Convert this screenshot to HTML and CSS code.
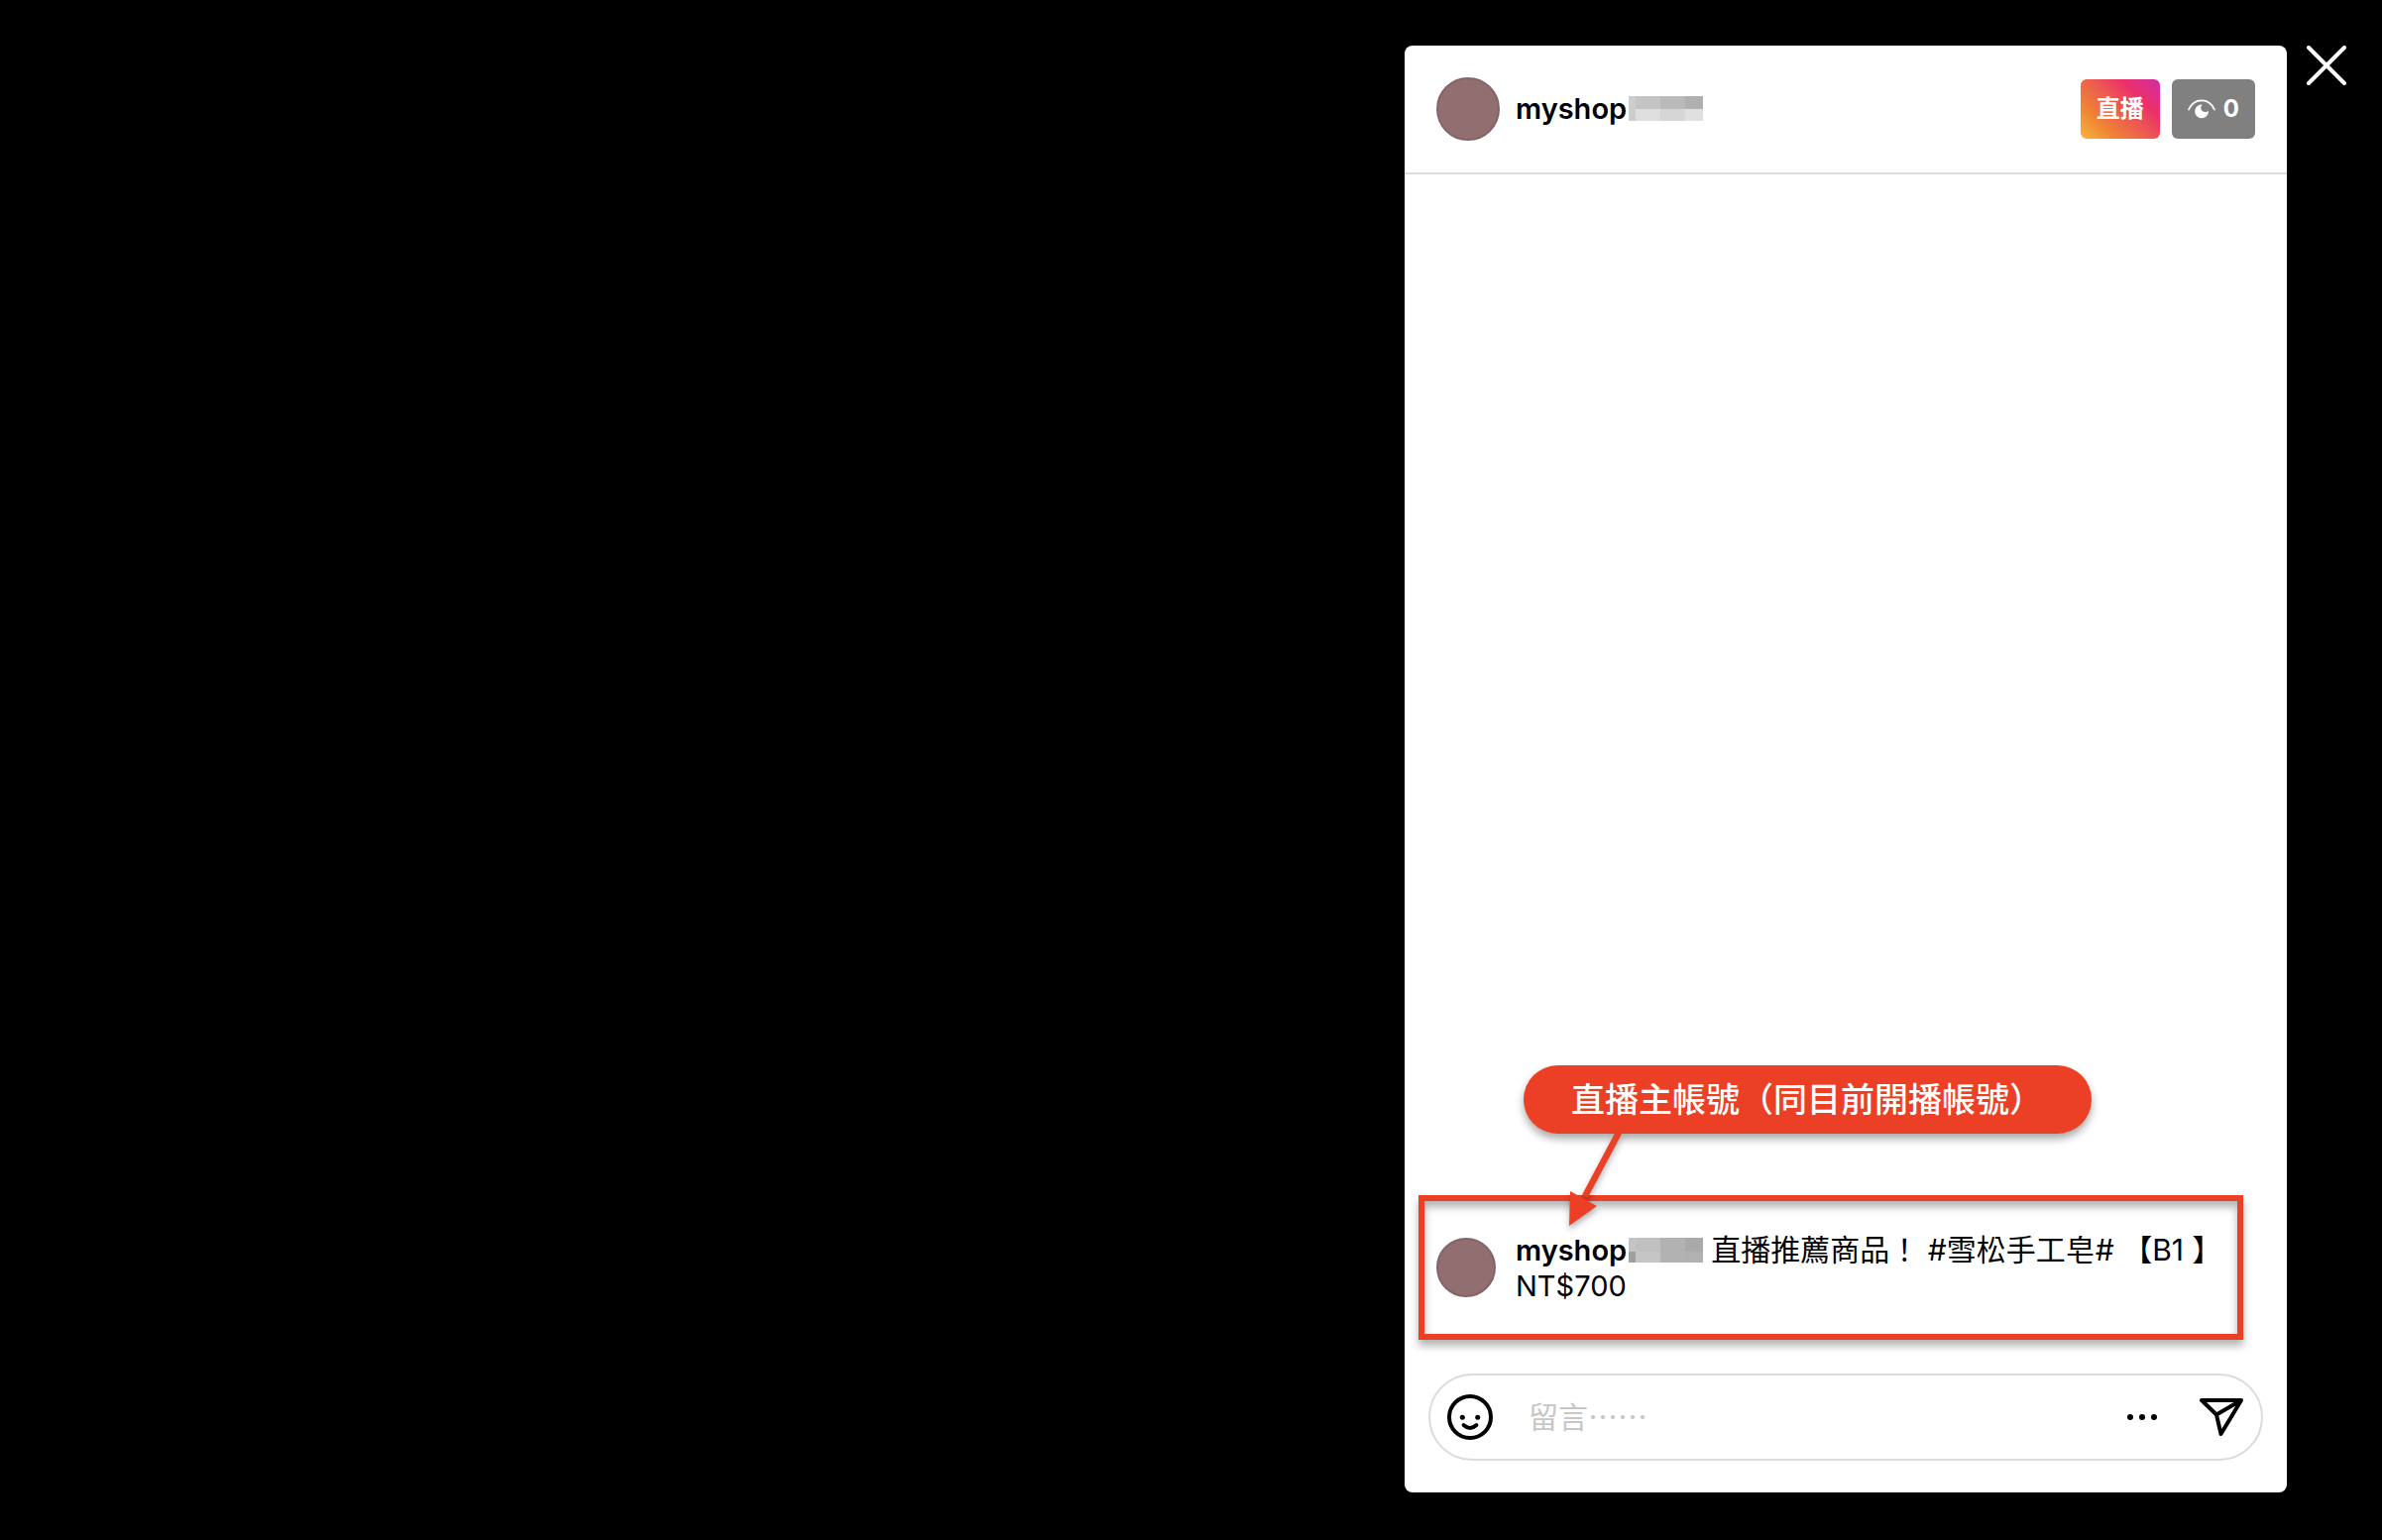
FILE: index.html
```html
<!DOCTYPE html>
<html lang="zh-Hant">
<head>
    <meta charset="UTF-8">
    <meta name="viewport" content="width=device-width, initial-scale=1.0">
    <title>直播</title>
    <link rel="stylesheet" href="styles.css">
</head>
<body>
    <div class="live-page">
        <!-- Video -->
        <main class="video-area"></main>

        <!-- Comment panel -->
        <aside class="panel">
            <header class="panel-header">
                <span class="avatar"></span>
                <span class="username">myshop<svg class="mask" viewBox="0 0 75 25" shape-rendering="crispEdges" aria-hidden="true">
                    <rect width="7" height="25" fill="#cdcdcd"/>
                    <rect x="7" width="25" height="13" fill="#c4c4c4"/>
                    <rect x="32" width="25" height="13" fill="#bababa"/>
                    <rect x="57" width="18" height="13" fill="#b0b0b0"/>
                    <rect x="7" y="13" width="25" height="12" fill="#dedede"/>
                    <rect x="32" y="13" width="25" height="12" fill="#d6d6d6"/>
                    <rect x="57" y="13" width="18" height="12" fill="#e0e0e0"/>
                </svg></span>
                <div class="badges">
                    <span class="badge badge-live">直播</span>
                    <span class="badge badge-viewers">
                        <svg class="eye-icon" viewBox="0 0 28 20" aria-hidden="true">
                            <path d="M1 10.500C6.500-1.800 21.500-1.800 27 10.500" fill="none" stroke="#fff" stroke-width="1.800" stroke-linecap="round"/>
                            <path d="M14.600 5.500A6.900 6.900 0 1 0 20.900 11.800A4.400 4.400 0 0 1 14.600 5.500Z" fill="#fff"/>
                        </svg>
                        <span>0</span>
                    </span>
                </div>
            </header>

            <div class="thread">
                <article class="comment">
                    <span class="avatar avatar-small"></span>
                    <p class="comment-text"><strong>myshop</strong><svg class="mask" viewBox="0 0 75 25" shape-rendering="crispEdges" aria-hidden="true">
                        <rect width="7" height="14" fill="#c4c4c4"/>
                        <rect x="7" width="25" height="14" fill="#c0c0c0"/>
                        <rect x="32" width="25" height="25" fill="#b2b2b2"/>
                        <rect x="57" width="18" height="14" fill="#a9a9a9"/>
                        <rect y="14" width="7" height="11" fill="#a0a0a0"/>
                        <rect x="7" y="14" width="25" height="11" fill="#c5c5c5"/>
                        <rect x="57" y="14" width="18" height="11" fill="#b1b1b1"/>
                    </svg> <span class="product">直播推薦商品！ #雪松手工皂# 【B1 】</span> <span class="price">NT$700</span></p>

                    <!-- Callout -->
                    <div class="callout">直播主帳號（同目前開播帳號）</div>
                    <svg class="callout-arrow" viewBox="0 0 60 100" aria-hidden="true">
                        <path d="M53-1L19 63" stroke="#eb4026" stroke-width="6.500" fill="none"/>
                        <path d="M3 93L4 58L31 73Z" fill="#eb4026"/>
                    </svg>
                </article>
            </div>

            <form class="message-bar">
                <button type="button" class="icon-button" aria-label="表情符號">
                    <svg width="46" height="46" viewBox="0 0 46 46">
                        <circle cx="23" cy="23" r="21" fill="none" stroke="#000" stroke-width="4"/>
                        <circle cx="15.300" cy="23.300" r="2.500"/>
                        <circle cx="30.700" cy="23.300" r="2.500"/>
                        <path d="M16.500 31Q23 37 29.500 31" fill="none" stroke="#000" stroke-width="3.800" stroke-linecap="round"/>
                    </svg>
                </button>
                <input type="text" class="message-input" placeholder="留言⋯⋯" aria-label="留言">
                <button type="button" class="icon-button" aria-label="更多">
                    <svg width="30" height="6" viewBox="0 0 30 6">
                        <circle cx="3" cy="3" r="3"/>
                        <circle cx="15" cy="3" r="3"/>
                        <circle cx="27" cy="3" r="3"/>
                    </svg>
                </button>
                <button type="submit" class="icon-button send-button" aria-label="傳送">
                    <svg width="44" height="40" viewBox="0 0 44 40">
                        <path d="M2 3H42L21.500 37L17 17.500ZM42 3L17 17.500" fill="none" stroke="#000" stroke-width="4" stroke-linejoin="round"/>
                    </svg>
                </button>
            </form>
        </aside>

        <div class="side">
            <button type="button" class="icon-button" aria-label="關閉">
                <svg width="40" height="40" viewBox="0 0 40 40">
                    <path d="M2 2L38 38M38 2L2 38" stroke="#fff" stroke-width="4" stroke-linecap="round"/>
                </svg>
            </button>
        </div>
    </div>
</body>
</html>
```
FILE: styles.css
```css
/* Global Styles */
* {
    box-sizing: border-box;
}

body {
    margin: 0;
    background: #000;
    color: #000;
    font-family: Inter, "Noto Sans CJK TC", sans-serif;
    font-size: 29px;
    line-height: 36px;
}

.live-page {
    display: flex;
    min-height: 100vh;
    padding: 46px 0 48px;
}

.video-area {
    flex: 1;
}

.side {
    width: 96px;
    padding-left: 20px;
}

.icon-button {
    display: flex;
    padding: 0;
    border: none;
    background: none;
    cursor: pointer;
}

/* Panel */
.panel {
    display: flex;
    flex-direction: column;
    width: 100%;
    max-width: 890px;
    padding-bottom: 32px;
    background: #fff;
    border-radius: 8px;
}

.panel-header {
    display: flex;
    align-items: center;
    gap: 16px;
    padding: 32px;
    border-bottom: 2px solid #dbdbdb;
}

.avatar {
    flex: none;
    width: 64px;
    height: 64px;
    border: 2px solid #856466;
    border-radius: 50%;
    background: #916e70;
}

.avatar-small {
    width: 60px;
    height: 60px;
}

.username,
.comment-text strong {
    font-weight: 600;
}

.mask {
    width: 75px;
    height: 25px;
    margin-left: 2px;
    vertical-align: -2px;
}

/* Badges */
.badges {
    display: flex;
    gap: 12px;
    margin-left: auto;
}

.badge {
    display: flex;
    align-items: center;
    gap: 8px;
    height: 60px;
    padding: 0 16px;
    border-radius: 6px;
    color: #fff;
    font-size: 24px;
    font-weight: 700;
}

.badge-live {
    background: linear-gradient(45deg, #f8b540, #ef8432 25%, #ed5b50 50%, #ec3069 72%, #cf2ca6);
}

.badge-viewers {
    background: #808080;
}

.eye-icon {
    width: 28px;
    height: 20px;
}

/* Comments */
.thread {
    display: flex;
    flex: 1;
    flex-direction: column;
    justify-content: flex-end;
    padding: 0 44px 34px 14px;
}

.comment {
    position: relative;
    display: flex;
    align-items: center;
    gap: 20px;
    height: 146px;
    padding: 0 12px;
    border: 6px solid #eb4026;
    box-shadow: 0 6px 8px rgba(0, 0, 0, 0.3), inset 0 6px 8px rgba(0, 0, 0, 0.3);
}

.comment-text {
    margin: 0;
}

.product {
    font-size: 30px;
}

/* Callout */
.callout {
    position: absolute;
    bottom: 202px;
    left: 100px;
    padding: 17px 49px 16px 48px;
    border-radius: 35px;
    background: #eb4026;
    box-shadow: 0 5px 8px rgba(0, 0, 0, 0.35);
    color: #fff;
    font-size: 34px;
    font-weight: 500;
    white-space: nowrap;
}

.callout-arrow {
    position: absolute;
    top: -68px;
    left: 143px;
    width: 60px;
    height: 100px;
    filter: drop-shadow(0 4px 3px rgba(0, 0, 0, 0.3));
}

/* Message bar */
.message-bar {
    display: flex;
    align-items: center;
    height: 88px;
    margin: 0 24px;
    padding: 0 18px 0 17px;
    border: 2px solid #dbdbdb;
    border-radius: 44px;
}

.message-input {
    flex: 1;
    min-width: 0;
    padding: 0 36px;
    border: none;
    outline: none;
    background: none;
    font: inherit;
    font-size: 30px;
}

.message-input::placeholder {
    color: #c7c7c7;
    opacity: 1;
}

.send-button {
    margin-left: 43px;
}
```
